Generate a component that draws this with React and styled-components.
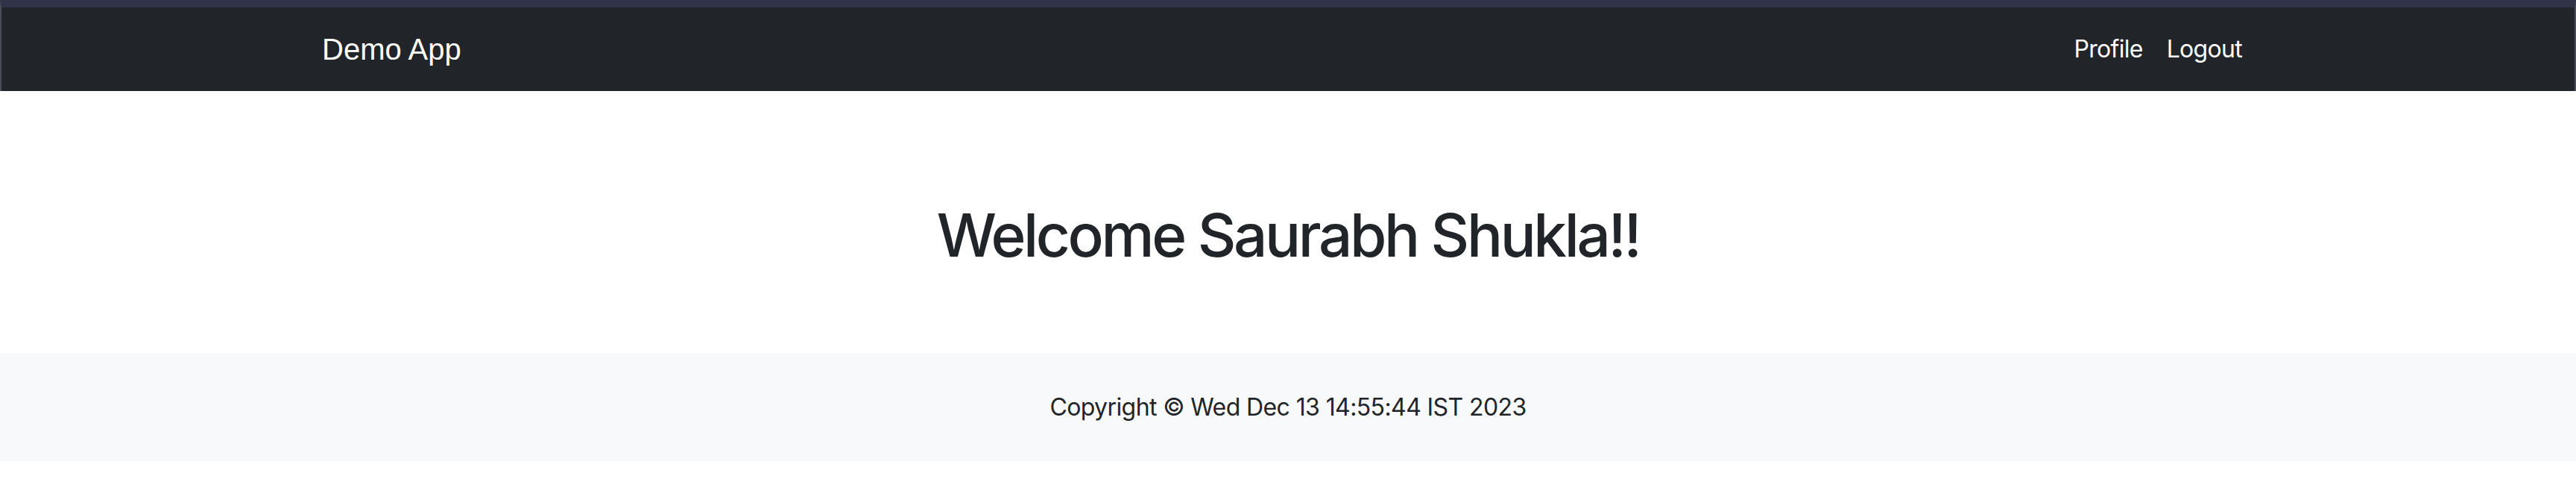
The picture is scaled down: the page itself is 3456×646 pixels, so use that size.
import React from "react";
import styled, { createGlobalStyle } from "styled-components";

const GlobalStyle = createGlobalStyle`
  *, *::before, *::after { box-sizing: border-box; }
  html, body { margin: 0; padding: 0; background: #ffffff; }
  body {
    font-family: Inter, "Noto Sans", "Liberation Sans", Arial, sans-serif;
    color: #212529;
    -webkit-font-smoothing: antialiased;
  }
`;

const Header = styled.header`
  border-top: 10px solid #313448;
  border-left: 2px solid #4a4d55;
  border-right: 2px solid #4a4d55;
  background: #212529;
`;

const Container = styled.div`
  width: 2640px;
  margin: 0 auto;
  padding: 0 24px;
  display: flex;
  align-items: center;
  justify-content: ${(p) => p.$justify || "center"};
`;

const NavBar = styled(Container)`
  padding-top: 16px;
  padding-bottom: 16px;
`;

const Brand = styled.a`
  font-family: "Liberation Sans", Arial, sans-serif;
  font-size: 40px;
  line-height: 60px;
  padding: 10px 0;
  color: #ffffff;
  text-decoration: none;
`;

const NavList = styled.nav`
  display: flex;
  align-items: center;
`;

const NavLink = styled.a`
  font-size: 32px;
  line-height: 48px;
  padding: 16px;
  color: #ffffff;
  text-decoration: none;
  letter-spacing: -0.7px;
`;

const Main = styled.main`
  padding: 145px 0 95px;
`;

const Heading = styled.h1`
  margin: 0 0 16px;
  font-size: 80px;
  line-height: 96px;
  font-weight: 500;
  text-align: center;
  letter-spacing: -3.4px;
  color: #212529;
`;

const Footer = styled.footer`
  background: #f8f9fa;
  padding: 48px 0;
`;

const FooterText = styled.p`
  margin: 0;
  font-size: 32px;
  line-height: 48px;
  text-align: center;
  letter-spacing: -0.6px;
  color: #212529;
`;

export default function App() {
  return (
    <>
      <GlobalStyle />
      <Header>
        <NavBar $justify="space-between">
          <Brand href="#">Demo App</Brand>
          <NavList>
            <NavLink href="#">Profile</NavLink>
            <NavLink href="#">Logout</NavLink>
          </NavList>
        </NavBar>
      </Header>
      <Main>
        <Heading>Welcome Saurabh Shukla!!</Heading>
      </Main>
      <Footer>
        <FooterText>Copyright © Wed Dec 13 14:55:44 IST 2023</FooterText>
      </Footer>
    </>
  );
}
